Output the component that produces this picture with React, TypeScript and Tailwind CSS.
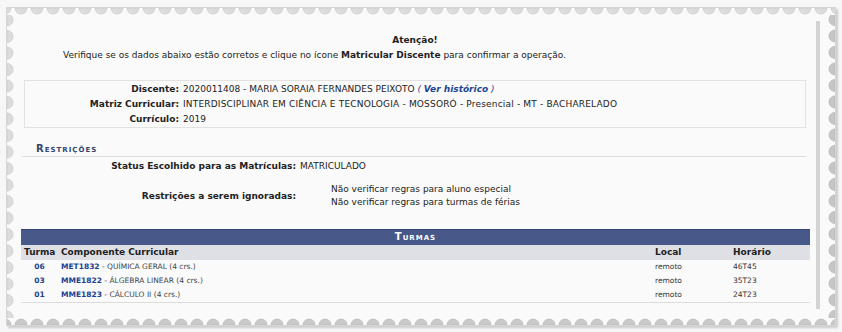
import React from "react";

function EdgeTop() {
  return (
    <svg className="block w-full h-[7px]">
      <defs>
        <pattern id="sc-top" width="16" height="7" patternUnits="userSpaceOnUse" x="6" y="0">
          <path d="M2 0 A6 6 0 0 0 14 0 Z" fill="#dcdcdc" stroke="#cacaca" strokeWidth="0.8" />
        </pattern>
      </defs>
      <rect width="100%" height="100%" fill="url(#sc-top)" />
    </svg>
  );
}

function EdgeBottom() {
  return (
    <svg className="block w-full h-[7px]">
      <defs>
        <pattern id="sc-bot" width="16" height="7" patternUnits="userSpaceOnUse" x="6" y="0">
          <path d="M2 7 A6 6 0 0 1 14 7 Z" fill="#c9c9c9" stroke="#b8b8b8" strokeWidth="0.8" />
        </pattern>
      </defs>
      <rect width="100%" height="100%" fill="url(#sc-bot)" />
    </svg>
  );
}

function EdgeLeft() {
  return (
    <svg className="block w-[7px] h-full">
      <defs>
        <pattern id="sc-left" width="7" height="16.5" patternUnits="userSpaceOnUse" x="0" y="-3.25">
          <path d="M0 2.25 A6 6 0 0 1 0 14.25 Z" fill="#dcdcdc" stroke="#cacaca" strokeWidth="0.8" />
        </pattern>
      </defs>
      <rect width="100%" height="100%" fill="url(#sc-left)" />
    </svg>
  );
}

function EdgeRight() {
  return (
    <svg className="block w-[8px] h-full">
      <defs>
        <pattern id="sc-right" width="8" height="16.5" patternUnits="userSpaceOnUse" x="0" y="-3.75">
          <path d="M8 2.25 A6 6 0 0 0 8 14.25 Z" fill="#c6c6c6" stroke="#b4b4b4" strokeWidth="0.8" />
        </pattern>
      </defs>
      <rect width="100%" height="100%" fill="url(#sc-right)" />
    </svg>
  );
}

const turmas = [
  { t: "06", code: "MET1832", name: "QUÍMICA GERAL (4 crs.)", local: "remoto", hor: "46T45" },
  { t: "03", code: "MME1822", name: "ÁLGEBRA LINEAR (4 crs.)", local: "remoto", hor: "35T23" },
  { t: "01", code: "MME1823", name: "CÁLCULO II (4 crs.)", local: "remoto", hor: "24T23" },
];

export default function App() {
  return (
    <div className="w-[842px] h-[332px] bg-[#f7f7f7] pl-[6px] pt-[7px] font-['DejaVu_Sans',Verdana,sans-serif] text-[9px] text-[#222]">
      <div className="w-[830px] h-[319px] border border-[#d6d6d6] bg-[#fafafa] flex flex-col shadow-[2px_2px_2px_rgba(0,0,0,0.18)]">
        <EdgeTop />
        <div className="flex h-[303px]">
          <EdgeLeft />
          <div className="flex-1">
            <div className="mt-[6px] w-[806px] h-[288px] border-r-4 border-[#d4d4d4] pt-[12px]">
              <div className="h-[14px] leading-[14px] text-center font-bold">Atenção!</div>
              <div className="mt-[1px] h-[14px] leading-[14px] pl-[49px]">
                Verifique se os dados abaixo estão corretos e clique no ícone <b>Matricular Discente</b> para confirmar a operação.
              </div>

              <div className="mt-[18px] mx-[10px] border border-[#e2e2e2] pt-[1px]">
                <div className="grid grid-cols-[154px_1fr] gap-x-[4px] leading-[15px]">
                  <div className="text-right font-bold h-[15px]">Discente:</div>
                  <div className="h-[15px]">
                    2020011408 - MARIA SORAIA FERNANDES PEIXOTO{" "}
                    <span className="italic text-[#1d4595]">
                      ( <b>Ver histórico</b> )
                    </span>
                  </div>
                  <div className="text-right font-bold h-[15px]">Matriz Curricular:</div>
                  <div className="h-[15px] tracking-[0.18px]">INTERDISCIPLINAR EM CIÊNCIA E TECNOLOGIA - MOSSORÓ - Presencial - MT - BACHARELADO</div>
                  <div className="text-right font-bold h-[15px]">Currículo:</div>
                  <div className="h-[15px]">2019</div>
                </div>
              </div>

              <div className="mt-[13px] ml-[8px] mr-[10px] h-[16px] leading-[15px] border-b border-[#dcdcdc] pl-[14px]">
                <span className="font-bold [font-variant:small-caps] tracking-[1px] text-[#35456e] text-[10px]">Restrições</span>
              </div>

              <div className="mt-[2px] grid grid-cols-[282px_1fr] gap-x-[4px]">
                <div className="text-right font-bold h-[15px] leading-[15px]">Status Escolhido para as Matrículas:</div>
                <div className="h-[15px] leading-[15px]">MATRICULADO</div>
                <div className="text-right font-bold self-center pt-[10px]">Restrições a serem ignoradas:</div>
                <div className="pt-[9px] pl-[31px] leading-[13px]">
                  <div>Não verificar regras para aluno especial</div>
                  <div>Não verificar regras para turmas de férias</div>
                </div>
              </div>

              <div className="mt-[20px] ml-[7px] mr-[6px]">
                <div className="h-[16px] bg-[#485889] border-t border-[#34447a] text-center text-white font-bold [font-variant:small-caps] tracking-[1px] text-[10px] leading-[14px]">
                  Turmas
                </div>
                <table className="w-full table-fixed border-collapse border-b border-[#dcdcdc]">
                  <colgroup>
                    <col className="w-[37px]" />
                    <col className="w-[594px]" />
                    <col className="w-[78px]" />
                    <col />
                  </colgroup>
                  <thead>
                    <tr className="bg-[#dfe0e5] h-[15px] text-[9px] font-bold text-left">
                      <th className="pl-[3px] font-bold p-0 leading-[15px]">Turma</th>
                      <th className="pl-[3px] font-bold p-0 leading-[15px]">Componente Curricular</th>
                      <th className="pl-[3px] font-bold p-0 leading-[15px]">Local</th>
                      <th className="pl-[3px] font-bold p-0 leading-[15px]">Horário</th>
                    </tr>
                  </thead>
                  <tbody className="text-[7.5px]">
                    {turmas.map((r) => (
                      <tr key={r.t} className="h-[14px]">
                        <td className="text-center font-bold text-[#1d3f8f] leading-[14px] p-0">{r.t}</td>
                        <td className="pl-[3px] leading-[14px] p-0 text-[#444]">
                          <span className="font-bold text-[#1d3f8f]">{r.code}</span> - {r.name}
                        </td>
                        <td className="pl-[3px] leading-[14px] p-0 text-[#333]">{r.local}</td>
                        <td className="pl-[3px] leading-[14px] p-0 text-[#333]">{r.hor}</td>
                      </tr>
                    ))}
                  </tbody>
                </table>
              </div>
            </div>
          </div>
          <EdgeRight />
        </div>
        <EdgeBottom />
      </div>
    </div>
  );
}
